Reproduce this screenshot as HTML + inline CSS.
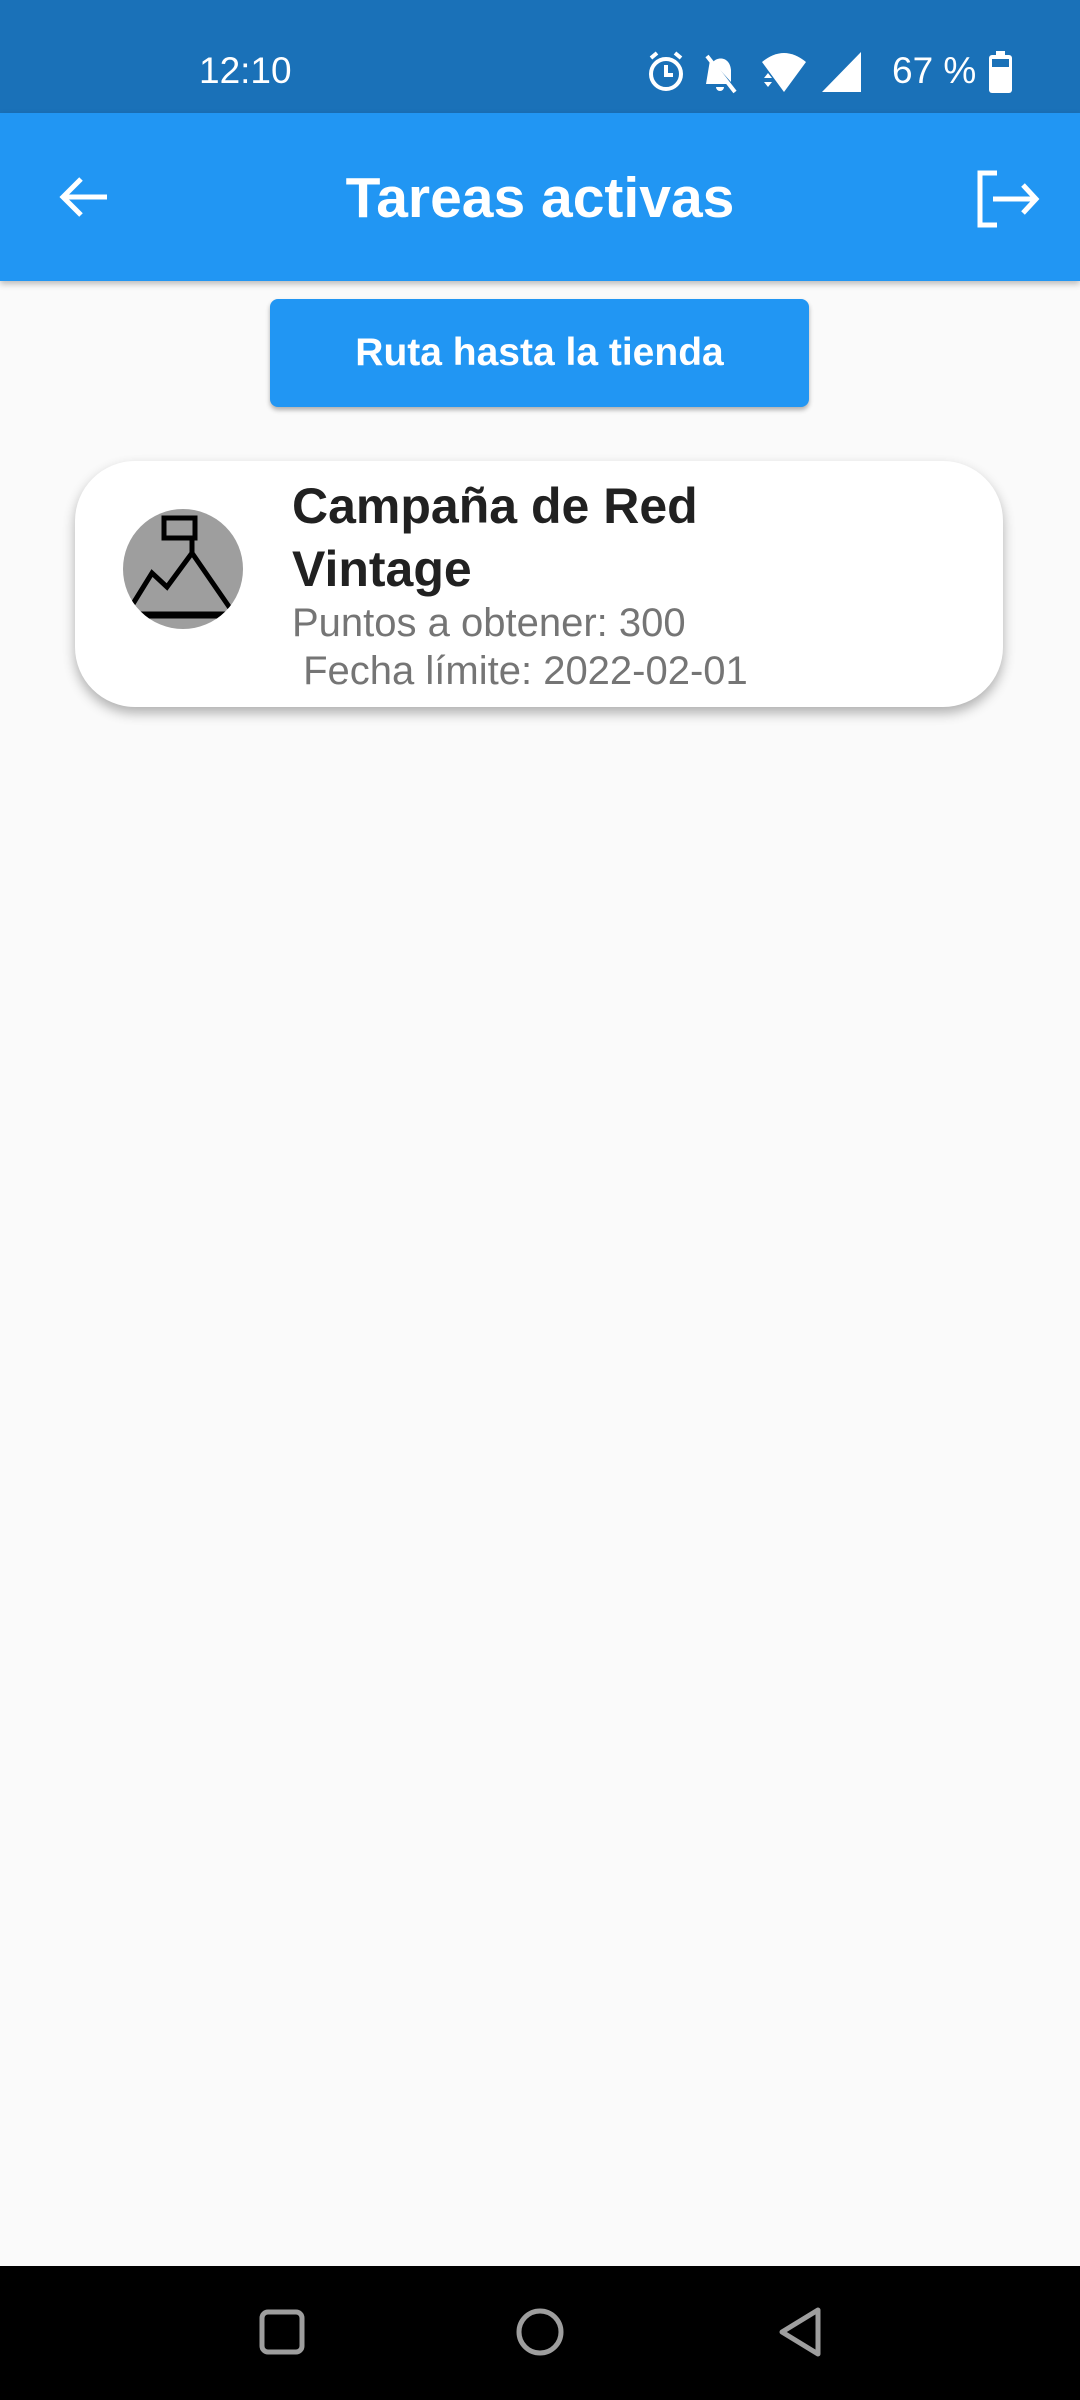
<!DOCTYPE html>
<html><head><meta charset="utf-8"><style>
*{margin:0;padding:0;box-sizing:border-box}
body{width:1080px;height:2400px;background:#FAFAFA;font-family:"Liberation Sans",Roboto,sans-serif;position:relative;overflow:hidden}
.sb{position:absolute;left:0;top:0;width:1080px;height:113px;background:#1A71B8;color:#fff}
.ab{position:absolute;left:0;top:113px;width:1080px;height:168px;background:#2196F3;box-shadow:0 3px 6px rgba(0,0,0,.25)}
.t{position:absolute;color:#fff;white-space:nowrap}
.btn{position:absolute;left:270px;top:299px;width:539px;height:108px;background:#2196F3;border-radius:8px;box-shadow:0 3px 5px rgba(0,0,0,.3);color:#fff;font-size:39px;font-weight:bold;text-align:center;line-height:108px}
.card{position:absolute;left:75px;top:461px;width:928px;height:246px;background:#fff;border-radius:60px;box-shadow:0 6px 12px rgba(0,0,0,.3)}
.nav{position:absolute;left:0;top:2266px;width:1080px;height:134px;background:#000}
</style></head><body>
<div class="sb">
<div class="t" style="left:199px;top:50px;font-size:37px">12:10</div>
<svg style="position:absolute;left:645px;top:50px" width="380" height="46" viewBox="645 50 380 46">
<g fill="none" stroke="#fff" stroke-width="4"><circle cx="666" cy="74" r="15"/><path d="M666 65v10h7M651 58l6-5M681 58l-6-5"/></g>
<path d="M707 56l28 36" stroke="#fff" stroke-width="4"/>
<path d="M706 84h22l-18-24zM713 62c5-6 17-5 18 8v12z M716 87h8a4 4 0 0 1-8 0z" fill="#fff"/>
<path d="M762 62q22-18 44 0l-22 30z" fill="#fff"/>
<path d="M764 78l4-5 4 5zM764 82l4 5 4-5z" fill="#fff"/>
<path d="M822 92l39-40v40z" fill="#fff"/>
<text x="892" y="83" fill="#fff" font-size="37" font-family="Liberation Sans">67 %</text>
<rect x="996" y="51" width="9" height="5" fill="#fff"/><rect x="989" y="55" width="23" height="38" rx="3" fill="#fff"/><rect x="992" y="59" width="17" height="8" fill="#1A71B8"/>
</svg>
</div>
<div class="ab">
<svg style="position:absolute;left:55px;top:60px" width="60" height="50" viewBox="0 0 60 50"><path d="M52 24H10M26 6L8 24l18 18" fill="none" stroke="#fff" stroke-width="5"/></svg>
<div class="t" style="left:0;width:1080px;text-align:center;top:52px;font-size:57px;font-weight:bold">Tareas activas</div>
<svg style="position:absolute;left:975px;top:56px" width="70" height="60" viewBox="0 0 70 60"><path d="M22 4H5v52h17" fill="none" stroke="#fff" stroke-width="5"/><path d="M18 30h42M48 16l13 14-13 14" fill="none" stroke="#fff" stroke-width="5"/></svg>
</div>
<div class="btn">Ruta hasta la tienda</div>
<div class="card">
<svg style="position:absolute;left:48px;top:48px" width="120" height="120" viewBox="0 0 120 120"><defs><clipPath id="c"><circle cx="60" cy="60" r="60"/></clipPath></defs><circle cx="60" cy="60" r="60" fill="#9E9E9E"/><g clip-path="url(#c)" fill="none" stroke="#000" stroke-width="5"><rect x="41" y="9" width="31" height="20"/><path d="M69 29v15L44 78 29 64 8 98M69 44l40 58"/><path d="M10 106h100" stroke-width="7"/></g></svg>
<div style="position:absolute;left:217px;top:14px;font-size:50px;font-weight:bold;color:#212121;line-height:63px">Campaña de Red<br>Vintage</div>
<div style="position:absolute;left:217px;top:138px;font-size:40px;color:#757575;line-height:48px;white-space:pre">Puntos a obtener: 300
 Fecha límite: 2022-02-01</div>
</div>
<div class="nav">
<svg width="1080" height="134" viewBox="0 2266 1080 134" style="position:absolute;left:0;top:0"><g fill="none" stroke="#9E9E9E" stroke-width="5"><rect x="262" y="2312" width="40" height="40" rx="6"/><circle cx="540" cy="2332" r="21"/><path d="M818 2310v44l-36-22z" stroke-linejoin="round"/></g></svg>
</div>
</body></html>
